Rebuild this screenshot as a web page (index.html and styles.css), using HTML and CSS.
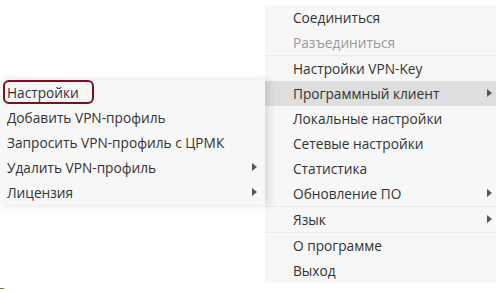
FILE: index.html
```html
<!DOCTYPE html>
<html lang="ru">
  <head>
    <meta charset="UTF-8" />
    <title>VPN menu</title>
    <link rel="stylesheet" href="styles.css">
  </head>
  <body>
    <ul class="menu main-menu">
      <li class="item">Соединиться</li>
      <li class="item disabled">Разъединиться</li>
      <li class="item sep">Настройки VPN-Key</li>
      <li class="item active has-sub">Программный клиент</li>
      <li class="item">Локальные настройки</li>
      <li class="item">Сетевые настройки</li>
      <li class="item">Статистика</li>
      <li class="item has-sub">Обновление ПО</li>
      <li class="item sep has-sub">Язык</li>
      <li class="item sep">О программе</li>
      <li class="item">Выход</li>
    </ul>

    <ul class="menu sub-menu">
      <li class="item marked">Настройки</li>
      <li class="item">Добавить VPN-профиль</li>
      <li class="item">Запросить VPN-профиль с ЦРМК</li>
      <li class="item has-sub">Удалить VPN-профиль</li>
      <li class="item has-sub">Лицензия</li>
    </ul>

    <div class="corner-mark"></div>
  </body>
</html>
```

FILE: styles.css
```css
body {
  font-family: "Open Sans", "DejaVu Sans", sans-serif;
  font-size: 13.7px;
  color: #333333;
  background: #ffffff;
  margin: 0;
  width: 499px;
  height: 292px;
  position: relative;
  overflow: hidden;
}
.menu {
  list-style: none;
  margin: 0;
  padding: 0;
  background: #f7f7f7;
}
.main-menu {
  margin: 5px 0 0 265px;
  width: 231px;
}
.sub-menu {
  position: absolute;
  top: 80px;
  left: 0;
  width: 265px;
  box-shadow: 4px 0 8px rgba(0, 0, 0, 0.12);
}
.item {
  position: relative;
  height: 25px;
  line-height: 25px;
  padding-left: 28px;
  white-space: nowrap;
}
.sub-menu .item {
  padding-left: 7px;
}
.item.disabled {
  color: #9a9a9a;
}
.item.sep {
  border-top: 1px solid #e9e9e9;
}
.item.active {
  background: #dedede;
}
.has-sub::after {
  content: "";
  position: absolute;
  right: 4px;
  top: 8px;
  border-left: 5px solid #555555;
  border-top: 4px solid transparent;
  border-bottom: 4px solid transparent;
}
.sub-menu .has-sub::after {
  right: 8px;
}
.marked::before {
  content: "";
  position: absolute;
  left: 3px;
  top: 0;
  width: 87px;
  height: 20px;
  border: 2px solid #7d1020;
  border-radius: 6px;
}
.corner-mark {
  position: absolute;
  left: 0;
  top: 288px;
  width: 4px;
  height: 1px;
  background: #6b7a3a;
}
```
